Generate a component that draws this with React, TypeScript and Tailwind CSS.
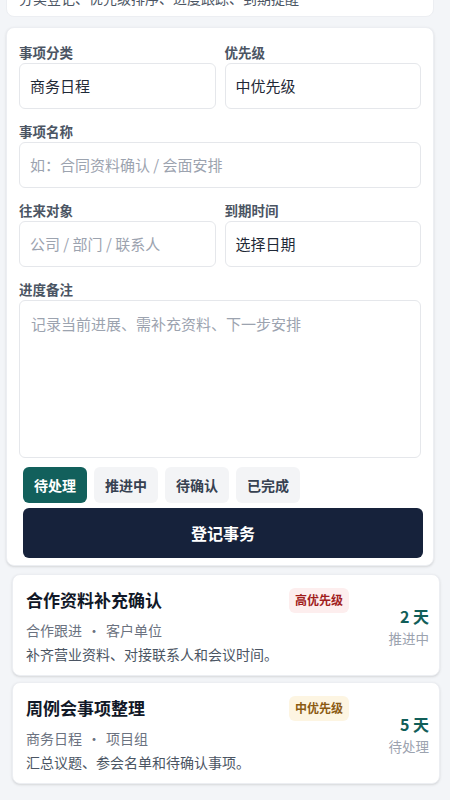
import React from "react";

const statuses = ["待处理", "推进中", "待确认", "已完成"];

const items = [
    {
        title: "合作资料补充确认",
        level: "高优先级",
        high: true,
        category: "合作跟进",
        party: "客户单位",
        note: "补齐营业资料、对接联系人和会议时间。",
        days: "2 天",
        status: "推进中",
    },
    {
        title: "周例会事项整理",
        level: "中优先级",
        high: false,
        category: "商务日程",
        party: "项目组",
        note: "汇总议题、参会名单和待确认事项。",
        days: "5 天",
        status: "待处理",
    },
];

function Field({ label, value, placeholder }: { label: string; value?: string; placeholder?: string }) {
    return (
        <div className="flex flex-col min-w-0">
            <label className="text-[13.5px] leading-[18px] font-bold text-[#4b5563] mb-[2px]">{label}</label>
            <div className="h-[46px] rounded-md border border-[#e5e7eb] bg-white px-[10px] flex items-center text-[15px]">
                {value ? (
                    <span className="text-[#1f2937]">{value}</span>
                ) : (
                    <span className="text-[#9ca3af]">{placeholder}</span>
                )}
            </div>
        </div>
    );
}

export default function App() {
    return (
        <div
            className="min-h-[800px] bg-[#f3f5f8] overflow-hidden"
            style={{ fontFamily: '"Noto Sans CJK SC", "Noto Sans", sans-serif' }}
        >
            {/* intro card, scrolled off the top */}
            <div className="pl-[6px] pr-[16px] -mt-[13px]">
                <div className="bg-white rounded-b-lg border border-[#eceef2] px-3 pb-[8px]">
                    <p className="text-[14px] leading-5 text-[#4b5563]">分类登记、优先级排序、进度跟踪、到期提醒</p>
                </div>
            </div>

            {/* form */}
            <div className="pl-[6px] pr-[16px] mt-[10px]">
                <div className="bg-white rounded-lg border border-[#eceef2] shadow-sm px-3 pt-[15px] pb-[7px]">
                    <div className="flex flex-col gap-[13px]">
                        <div className="grid grid-cols-2 gap-[9px]">
                            <Field label="事项分类" value="商务日程" />
                            <Field label="优先级" value="中优先级" />
                        </div>
                        <Field label="事项名称" placeholder="如：合同资料确认 / 会面安排" />
                        <div className="grid grid-cols-2 gap-[9px]">
                            <Field label="往来对象" placeholder="公司 / 部门 / 联系人" />
                            <Field label="到期时间" value="选择日期" />
                        </div>
                        <div className="flex flex-col">
                            <label className="text-[13.5px] leading-[18px] font-bold text-[#4b5563] mb-[2px]">进度备注</label>
                            <div className="h-[158px] rounded-md border border-[#e5e7eb] bg-white px-[11px] pt-[12px] text-[15px] text-[#9ca3af]">
                                记录当前进展、需补充资料、下一步安排
                            </div>
                        </div>
                    </div>

                    <div className="flex gap-[7px] mt-[9px] pl-[4px]">
                        {statuses.map((s, i) => (
                            <button
                                key={s}
                                className={
                                    i === 0
                                        ? "h-[36px] px-[11px] rounded-md bg-[#12605c] text-white text-[14px] font-bold"
                                        : "h-[36px] px-[11px] rounded-md bg-[#f3f4f6] text-[#374151] text-[14px] font-bold"
                                }
                            >
                                {s}
                            </button>
                        ))}
                    </div>

                    <button className="mt-[5px] ml-[4px] w-[calc(100%-2px)] h-[50px] rounded-md bg-[#16223b] text-white text-[16px] font-bold">
                        登记事务
                    </button>
                </div>
            </div>

            {/* list */}
            <div className="pl-[12px] pr-[10px] mt-[8px] flex flex-col gap-[6px]">
                {items.map((it) => (
                    <div key={it.title} className="bg-white rounded-lg border border-[#eceef2] shadow-sm pl-[13px] pr-[10px] pt-[12px] pb-[11px] flex items-center gap-4">
                        <div className="flex-1 min-w-0">
                            <div className="flex items-center justify-between">
                                <h3 className="text-[17px] leading-[26px] font-bold text-[#111827]">{it.title}</h3>
                                <span
                                    className={
                                        it.high
                                            ? "h-[25px] px-[6px] rounded-md bg-[#fdeeee] text-[#a11d1d] text-[12px] font-bold flex items-center"
                                            : "h-[25px] px-[6px] rounded-md bg-[#fdf5e2] text-[#8b5a12] text-[12px] font-bold flex items-center"
                                    }
                                >
                                    {it.level}
                                </span>
                            </div>
                            <p className="mt-[7px] text-[14px] leading-5 text-[#6b7280]">
                                {it.category}
                                <span className="mx-[5px]">·</span>
                                {it.party}
                            </p>
                            <p className="mt-[4px] text-[14px] leading-5 text-[#4b5563]">{it.note}</p>
                        </div>
                        <div className="w-[64px] flex flex-col items-end">
                            <span className="text-[16px] leading-6 font-bold text-[#115e59]">{it.days}</span>
                            <span className="text-[13.5px] leading-5 text-[#9ca3af]">{it.status}</span>
                        </div>
                    </div>
                ))}
            </div>
        </div>
    );
}
